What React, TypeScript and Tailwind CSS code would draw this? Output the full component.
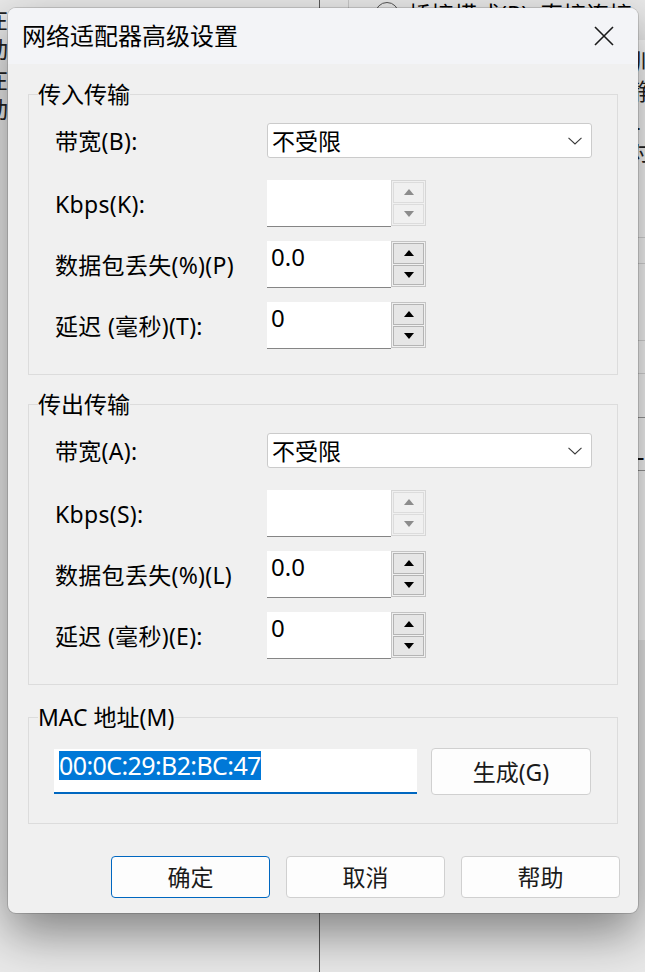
import React from "react";

const FONT = '"Noto Sans", "Noto Sans CJK SC", sans-serif';

function Chevron() {
  return (
    <svg width="14" height="8" viewBox="0 0 14 8" className="shrink-0">
      <polyline points="0.5,0.8 7,7 13.5,0.8" fill="none" stroke="#3a3a3a" strokeWidth="1.1" />
    </svg>
  );
}

function Arrow({ up, disabled }: { up: boolean; disabled?: boolean }) {
  const color = disabled ? "#8c8c8c" : "#000000";
  return (
    <svg width="10" height="6" viewBox="0 0 10 6">
      {up ? <polygon points="5,0 10,6 0,6" fill={color} /> : <polygon points="0,0 10,0 5,6" fill={color} />}
    </svg>
  );
}

function Combo() {
  return (
    <div className="flex h-[35px] w-[325px] items-center justify-between rounded-[3px] border border-[#cbcbcb] bg-white pl-[4px] pr-[9px]">
      <span className="text-[23px] leading-[28px] text-black">不受限</span>
      <Chevron />
    </div>
  );
}

function Spin({ value, disabled }: { value?: string; disabled?: boolean }) {
  return (
    <div className="flex h-[47px]">
      <div className="h-[47px] w-[124px] border-b border-[#858585] bg-white pl-[4px] pt-[2px] text-[24px] leading-[28px] text-black">
        {value}
      </div>
      <div
        className={`flex h-[46px] w-[35px] flex-col gap-[1px] border p-[1px] ${
          disabled ? "border-[#d6d6d6]" : "border-[#c4c4c4]"
        }`}
      >
        <div
          className={`flex flex-1 items-center justify-center border ${
            disabled ? "border-[#dcdcdc] bg-[#f0f0f0]" : "border-[#b4b4b4] bg-[#e6e6e6]"
          }`}
        >
          <Arrow up disabled={disabled} />
        </div>
        <div
          className={`flex flex-1 items-center justify-center border ${
            disabled ? "border-[#dcdcdc] bg-[#f0f0f0]" : "border-[#b4b4b4] bg-[#e6e6e6]"
          }`}
        >
          <Arrow up={false} disabled={disabled} />
        </div>
      </div>
    </div>
  );
}

function Row({ label, children, className = "" }: { label: string; children: React.ReactNode; className?: string }) {
  return (
    <div className={`flex items-center ${className}`}>
      <div className="w-[212px] text-[23px] leading-[28px] tracking-[0.3px] text-black">{label}</div>
      {children}
    </div>
  );
}

function TransferGroup({
  title,
  keys,
  className = "",
}: {
  title: string;
  keys: [string, string, string, string];
  className?: string;
}) {
  return (
    <fieldset className={`mx-[20px] border border-[#dcdcdc] pb-[25px] pl-[26px] pt-[17px] ${className}`}>
      <legend className="ml-[-17px] text-[23px] leading-[24px] text-black">{title}</legend>
      <Row label={`带宽(${keys[0]}):`}>
        <Combo />
      </Row>
      <Row label={`Kbps(${keys[1]}):`} className="mt-[22px]">
        <Spin disabled />
      </Row>
      <Row label={`数据包丢失(%)(${keys[2]})`} className="mt-[14px]">
        <Spin value="0.0" />
      </Row>
      <Row label={`延迟 (毫秒)(${keys[3]}):`} className="mt-[14px]">
        <Spin value="0" />
      </Row>
    </fieldset>
  );
}

function DialogButton({ label, primary }: { label: string; primary?: boolean }) {
  return (
    <button
      className={`flex h-[42px] w-[159px] items-center justify-center rounded-[4px] border bg-[#fdfdfd] text-[23px] leading-[28px] text-[#1a1a1a] ${
        primary ? "border-[#0067c0]" : "border-[#d0d0d0]"
      }`}
    >
      {label}
    </button>
  );
}

export default function App() {
  return (
    <div className="relative h-[972px] w-[645px] overflow-hidden bg-[#e9e9e9]" style={{ fontFamily: FONT }}>
      {/* window behind the dialog */}
      <div className="absolute left-[319px] top-0 h-[972px] w-px bg-[#5a5a5a]" />
      <div className="absolute left-[348px] top-0 h-[20px] w-px bg-[#c8c8c8]" />
      <div className="absolute left-[375px] top-[2px] h-[24px] w-[24px] rounded-full border-[1.5px] border-[#555]" />
      <div className="absolute left-[408px] top-[0px] text-[23px] leading-[28px] text-black">桥接模式(R): 直接连接</div>
      <div className="absolute left-[-15px] top-[4px] flex flex-col text-[23px] leading-[30px] text-[#222]">
        <span>在</span>
        <span>动</span>
        <span>在</span>
        <span>动</span>
      </div>
      <div className="absolute left-[636px] top-[40px] h-[600px] w-[10px] bg-[#fafafa]" />
      <div className="absolute left-[628px] top-[46px] flex flex-col text-[23px] leading-[30px] text-[#222]">
        <span>训</span>
        <span>静</span>
        <span>L</span>
        <span>对</span>
      </div>
      <div className="absolute left-[637px] top-[237px] h-px w-[10px] bg-[#d8d8d8]" />
      <div className="absolute left-[637px] top-[263px] h-px w-[10px] bg-[#d8d8d8]" />
      <div className="absolute left-[637px] top-[340px] h-px w-[10px] bg-[#d8d8d8]" />
      <div className="absolute left-[637px] top-[373px] h-px w-[10px] bg-[#d8d8d8]" />
      <div className="absolute left-[637px] top-[417px] h-px w-[10px] bg-[#9a9a9a]" />
      <div className="absolute left-[637px] top-[470px] h-px w-[10px] bg-[#9a9a9a]" />
      <div className="absolute left-[632px] top-[436px] text-[23px] leading-[30px] text-[#111]">L</div>

      {/* dialog */}
      <div className="absolute left-[8px] top-[8px] flex h-[905px] w-[630px] flex-col overflow-hidden rounded-[8px] bg-[#f0f0f0] shadow-[0_20px_50px_rgba(0,0,0,0.45),0_0_0_1px_rgba(0,0,0,0.14)]">
        <div className="flex h-[56px] shrink-0 items-center justify-between bg-[#f3f4f7] pl-[14px] pr-[24px]">
          <span className="text-[24px] leading-[28px] text-black">网络适配器高级设置</span>
          <svg width="20" height="20" viewBox="0 0 20 20">
            <path d="M1 1 L19 19 M19 1 L1 19" stroke="#1a1a1a" strokeWidth="1.6" fill="none" />
          </svg>
        </div>

        <div className="flex flex-1 flex-col pt-[18px]">
          <TransferGroup title="传入传输" keys={["B", "K", "P", "T"]} />
          <TransferGroup title="传出传输" keys={["A", "S", "L", "E"]} className="mt-[17px]" />

          <fieldset className="mx-[20px] mt-[20px] border border-[#dcdcdc] pb-[28px] pl-[25px] pt-[19px]">
            <legend className="ml-[-16px] text-[23px] leading-[24px] text-black">MAC 地址(M)</legend>
            <div className="flex items-center gap-[14px]">
              <div className="h-[45px] w-[363px] border-b-2 border-[#0067c0] bg-white pl-[5px] pt-[2px]">
                <span className="inline-block h-[29px] bg-[#0078d7] text-[25px] leading-[29px] tracking-[-0.6px] text-white">
                  00:0C:29:B2:BC:47
                </span>
              </div>
              <button className="flex h-[47px] w-[160px] items-center justify-center rounded-[4px] border border-[#d0d0d0] bg-[#fdfdfd] text-[23px] leading-[28px] text-[#1a1a1a]">
                生成(G)
              </button>
            </div>
          </fieldset>

          <div className="mt-[32px] flex justify-end gap-[16px] pr-[18px]">
            <DialogButton label="确定" primary />
            <DialogButton label="取消" />
            <DialogButton label="帮助" />
          </div>
        </div>
      </div>
    </div>
  );
}
